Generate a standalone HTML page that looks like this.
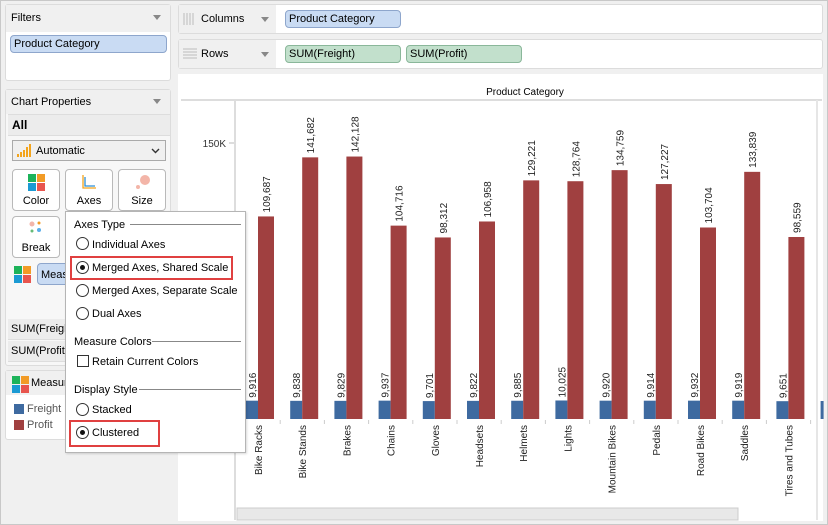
<!DOCTYPE html>
<html><head><meta charset="utf-8"><style>
*{margin:0;padding:0;box-sizing:border-box}
body{width:828px;height:525px;background:#f0f0f0;font-family:"Liberation Sans",Tahoma,sans-serif;font-size:11px;color:#000;position:relative;overflow:hidden}
.a{position:absolute}
.panel{background:#fff;border:1px solid #dcdcdc;border-radius:3px}
.pill{position:absolute;border-radius:4px;padding:2px 3px;font-size:11px;line-height:12px}
.blue{background:#c9dbf3;border:1px solid #8ea6cc}
.green{background:#c2e0cc;border:1px solid #8ab79a}
.tri{position:absolute;width:0;height:0;border-left:4px solid transparent;border-right:4px solid transparent;border-top:5px solid #888}
.btn{position:absolute;width:48px;height:42px;background:#fff;border:1px solid #b9b9b9;border-radius:4px;text-align:center;font-size:11px}
.radio{position:absolute;width:13px;height:13px;border:1px solid #333;border-radius:50%;background:#fff}
.radio.on::after{content:"";position:absolute;left:3px;top:3px;width:5px;height:5px;border-radius:50%;background:#111}
.pt{position:absolute;font-size:11px;white-space:nowrap}
.pop .pt{margin-top:1px}
</style></head><body>
<div class="a" style="left:0;top:0;width:828px;height:525px;border:1px solid #c8c8c8"></div>

<div class="a panel" style="left:5px;top:4px;width:166px;height:77px"></div>
<div class="a" style="left:6px;top:5px;width:164px;height:27px;background:#f0f0f0"></div>
<div class="pt" style="left:11px;top:12px">Filters</div>
<div class="tri" style="left:153px;top:15px"></div>
<div class="pill blue" style="left:10px;top:35px;width:157px;height:18px">Product Category</div>

<div class="a panel" style="left:178px;top:4px;width:645px;height:30px"></div>
<div class="a" style="left:179px;top:5px;width:97px;height:28px;background:#f0f0f0"></div>
<svg class="a" style="left:183px;top:13px" width="12" height="12"><g stroke="#bbb" stroke-width="1"><line x1="1" y1="0" x2="1" y2="12"/><line x1="4" y1="0" x2="4" y2="12"/><line x1="7" y1="0" x2="7" y2="12"/><line x1="10" y1="0" x2="10" y2="12"/></g></svg>
<div class="pt" style="left:201px;top:13px">Columns</div>
<div class="tri" style="left:261px;top:17px"></div>
<div class="pill blue" style="left:285px;top:10px;width:116px;height:18px">Product Category</div>

<div class="a panel" style="left:178px;top:39px;width:645px;height:30px"></div>
<div class="a" style="left:179px;top:40px;width:97px;height:28px;background:#f0f0f0"></div>
<svg class="a" style="left:183px;top:48px" width="14" height="13"><g stroke="#bbb"><line x1="0" y1="1" x2="14" y2="1"/><line x1="0" y1="4" x2="14" y2="4"/><line x1="0" y1="7" x2="14" y2="7"/><line x1="0" y1="10" x2="14" y2="10"/></g></svg>
<div class="pt" style="left:201px;top:48px">Rows</div>
<div class="tri" style="left:261px;top:52px"></div>
<div class="pill green" style="left:285px;top:45px;width:116px;height:18px">SUM(Freight)</div>
<div class="pill green" style="left:406px;top:45px;width:116px;height:18px">SUM(Profit)</div>

<div class="a" style="left:178px;top:74px;width:645px;height:447px;background:#fff"></div>
<svg class="a" style="left:0;top:0" width="828" height="525" font-family="Liberation Sans, sans-serif" font-size="10">
<text x="525" y="95" text-anchor="middle" font-size="10">Product Category</text>
<line x1="181" y1="100" x2="822" y2="100" stroke="#ddd" stroke-width="2"/>
<line x1="235" y1="101" x2="235" y2="520" stroke="#ddd" stroke-width="2"/>
<line x1="229" y1="143" x2="234" y2="143" stroke="#bbb"/>
<text x="226" y="147" text-anchor="end" font-size="10" fill="#333">150K</text>
<g id="bars"></g>
<rect x="237" y="508" width="501" height="12" fill="#e8e8e8" stroke="#ccc"/>
<line x1="817" y1="100" x2="817" y2="520" stroke="#e6e6e6" stroke-width="2"/>
</svg>

<div class="a panel" style="left:5px;top:89px;width:166px;height:277px;background:#f7f7f7"></div>
<div class="a" style="left:6px;top:90px;width:164px;height:24px;background:#f0f0f0"></div>
<div class="pt" style="left:11px;top:96px">Chart Properties</div>
<div class="tri" style="left:153px;top:99px"></div>
<div class="a" style="left:8px;top:114px;width:162px;height:22px;background:#ececec;border-top:1px solid #ddd;border-bottom:1px solid #ddd"></div>
<div class="pt" style="left:12px;top:118px;font-weight:bold;font-size:12px">All</div>
<div class="a" style="left:12px;top:140px;width:154px;height:21px;background:#f0f0f0;border:1px solid #aaa"></div>
<svg class="a" style="left:17px;top:144px" width="15" height="13"><g fill="#f3a41c"><rect x="0" y="10" width="2" height="3"/><rect x="3" y="8" width="2" height="5"/><rect x="6" y="6" width="2" height="7"/><rect x="9" y="3" width="2" height="10"/><rect x="12" y="0" width="2" height="13"/></g></svg>
<div class="pt" style="left:36px;top:145px">Automatic</div>
<svg class="a" style="left:151px;top:148px" width="9" height="6"><path d="M1 1 L4.5 4.5 L8 1" fill="none" stroke="#333" stroke-width="1.4"/></svg>

<div class="btn" style="left:12px;top:169px">
<svg style="position:absolute;left:15px;top:4px" width="18" height="18"><rect x="0" y="0" width="8" height="8" fill="#1db35a"/><rect x="9" y="0" width="8" height="8" fill="#f29b26"/><rect x="0" y="9" width="8" height="8" fill="#1b9ad3"/><rect x="9" y="9" width="8" height="8" fill="#e8554e"/></svg>
<div style="position:absolute;top:25px;width:100%">Color</div></div>
<div class="btn" style="left:65px;top:169px">
<svg style="position:absolute;left:16px;top:5px" width="14" height="14"><path d="M1 0 V13 H14" fill="none" stroke="#f3a41c" stroke-width="1.3"/><path d="M3 2 V11 H13" fill="none" stroke="#2d8fd5" stroke-width="1.3"/></svg>
<div style="position:absolute;top:25px;width:100%">Axes</div></div>
<div class="btn" style="left:118px;top:169px">
<svg style="position:absolute;left:15px;top:3px" width="18" height="18"><circle cx="11" cy="7" r="5" fill="#f3b5a8"/><circle cx="4" cy="14" r="2" fill="#f3b5a8"/></svg>
<div style="position:absolute;top:25px;width:100%">Size</div></div>
<div class="btn" style="left:12px;top:216px">
<svg style="position:absolute;left:16px;top:4px" width="16" height="16"><circle cx="3" cy="3" r="2.5" fill="#f2b5aa"/><circle cx="10" cy="2" r="1.5" fill="#f29b26"/><circle cx="3" cy="10" r="1.5" fill="#66bb77"/><circle cx="10" cy="9" r="2" fill="#5aaee8"/></svg>
<div style="position:absolute;top:25px;width:100%">Break</div></div>
<svg class="a" style="left:14px;top:266px" width="18" height="18"><rect x="0" y="0" width="8" height="8" fill="#1db35a"/><rect x="9" y="0" width="8" height="8" fill="#f29b26"/><rect x="0" y="9" width="8" height="8" fill="#1b9ad3"/><rect x="9" y="9" width="8" height="8" fill="#e8554e"/></svg>
<div class="pill blue" style="left:37px;top:263px;width:40px;height:22px;padding-top:5px">Meas</div>
<div class="a" style="left:8px;top:319px;width:60px;height:21px;background:#ececec;border-bottom:1px solid #ddd"></div>
<div class="pt" style="left:11px;top:323px">SUM(Freigh</div>
<div class="a" style="left:8px;top:341px;width:60px;height:21px;background:#ececec;border-bottom:1px solid #ddd"></div>
<div class="pt" style="left:11px;top:345px">SUM(Profit)</div>

<div class="a panel" style="left:5px;top:370px;width:166px;height:70px"></div>
<div class="a" style="left:6px;top:371px;width:164px;height:24px;background:#f0f0f0"></div>
<svg class="a" style="left:12px;top:376px" width="18" height="18"><rect x="0" y="0" width="8" height="8" fill="#1db35a"/><rect x="9" y="0" width="8" height="8" fill="#f29b26"/><rect x="0" y="9" width="8" height="8" fill="#1b9ad3"/><rect x="9" y="9" width="8" height="8" fill="#e8554e"/></svg>
<div class="pt" style="left:31px;top:377px">Measure</div>
<div class="a" style="left:14px;top:404px;width:10px;height:10px;background:#3e6aa0"></div>
<div class="pt" style="left:27px;top:403px;color:#555">Freight</div>
<div class="a" style="left:14px;top:420px;width:10px;height:10px;background:#a04040"></div>
<div class="pt" style="left:27px;top:419px;color:#555">Profit</div>

<div class="pop">
<div class="a" style="left:65px;top:211px;width:181px;height:242px;background:#fff;border:1px solid #b5b5b5;box-shadow:1px 1px 2px rgba(0,0,0,.15)"></div>
<div class="pt" style="left:74px;top:218px">Axes Type</div>
<div class="a" style="left:130px;top:224px;width:111px;height:1px;background:#888"></div>
<div class="radio" style="left:76px;top:237px"></div><div class="pt" style="left:92px;top:238px">Individual Axes</div>
<div class="a" style="left:70px;top:256px;width:163px;height:24px;border:2px solid #e04040"></div>
<div class="radio on" style="left:76px;top:261px"></div><div class="pt" style="left:92px;top:261px">Merged Axes, Shared Scale</div>
<div class="radio" style="left:76px;top:284px"></div><div class="pt" style="left:92px;top:284px">Merged Axes, Separate Scale</div>
<div class="radio" style="left:76px;top:307px"></div><div class="pt" style="left:92px;top:307px">Dual Axes</div>
<div class="pt" style="left:74px;top:335px">Measure Colors</div>
<div class="a" style="left:152px;top:341px;width:89px;height:1px;background:#888"></div>
<div class="a" style="left:77px;top:355px;width:12px;height:12px;border:1px solid #333;background:#fff"></div>
<div class="pt" style="left:92px;top:355px">Retain Current Colors</div>
<div class="pt" style="left:74px;top:383px">Display Style</div>
<div class="a" style="left:139px;top:389px;width:102px;height:1px;background:#888"></div>
<div class="radio" style="left:76px;top:403px"></div><div class="pt" style="left:92px;top:403px">Stacked</div>
<div class="a" style="left:69px;top:420px;width:91px;height:27px;border:2px solid #e04040"></div>
<div class="radio on" style="left:76px;top:426px"></div><div class="pt" style="left:92px;top:426px">Clustered</div>
</div>

<script>
var cats=[["Bike Racks",9916,109687],["Bike Stands",9838,141682],["Brakes",9829,142128],["Chains",9937,104716],["Gloves",9701,98312],["Headsets",9822,106958],["Helmets",9885,129221],["Lights",10025,128764],["Mountain Bikes",9920,134759],["Pedals",9914,127227],["Road Bikes",9932,103704],["Saddles",9919,133839],["Tires and Tubes",9651,98559]];
var s="",base=419,k=277/150000;
function f(n){return n.toLocaleString("en-US")}
cats.forEach(function(c,i){var x=236+i*44.2;
var hb=c[1]*k,hr=c[2]*k;
s+='<rect x="'+(x+10)+'" y="'+(base-hb)+'" width="12" height="'+hb+'" fill="#3e6aa0"/>';
s+='<rect x="'+(x+22)+'" y="'+(base-hr)+'" width="16" height="'+hr+'" fill="#a04040"/>';
s+='<text transform="translate('+(x+20)+','+(base-hb-3)+') rotate(-90)" fill="#222">'+f(c[1])+'</text>';
s+='<text transform="translate('+(x+34)+','+(base-hr-4)+') rotate(-90)" fill="#222">'+f(c[2])+'</text>';
s+='<line x1="'+(x+44.2)+'" y1="420" x2="'+(x+44.2)+'" y2="424" stroke="#ccc"/>';
s+='<text transform="translate('+(x+26)+',425) rotate(-90)" text-anchor="end" fill="#222">'+c[0]+'</text>';});
s+='<rect x="'+(236+13*44.2+10)+'" y="'+(base-18)+'" width="3" height="18" fill="#3e6aa0"/>';
document.getElementById("bars").innerHTML=s;
</script>
</body></html>
